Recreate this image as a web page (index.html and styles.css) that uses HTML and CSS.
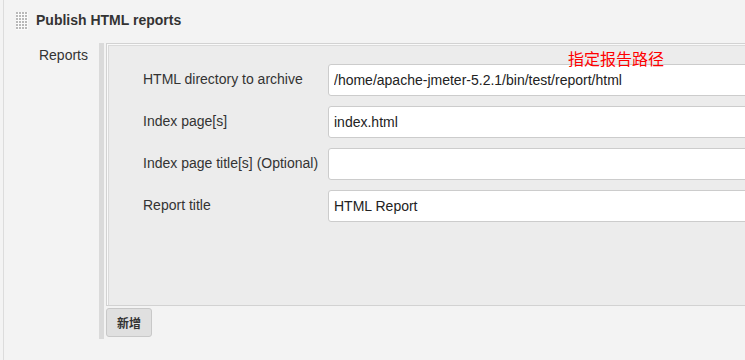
FILE: index.html
```html
<!DOCTYPE html>
<html>
<head>
<meta charset="utf-8">
<link rel="stylesheet" href="styles.css">
</head>
<body>
<div class="page">
  <div class="header">
    <svg class="handle" width="12" height="18" viewBox="0 0 12 18">
      <defs>
        <pattern id="dots" width="3" height="3" patternUnits="userSpaceOnUse">
          <rect width="3" height="3" fill="#fbfbfb"/>
          <rect x="0" y="0" width="2" height="2" fill="#b9b9b9"/>
        </pattern>
      </defs>
      <rect width="12" height="18" fill="url(#dots)"/>
    </svg>
    <span class="title">Publish HTML reports</span>
  </div>
  <div class="section">
    <div class="section-label">Reports</div>
    <div class="repeat">
      <div class="box">
        <div class="note">指定报告路径</div>
        <div class="row">
          <div class="label">HTML directory to archive</div>
          <div class="field"><input class="input" type="text" value="/home/apache-jmeter-5.2.1/bin/test/report/html"></div>
        </div>
        <div class="row">
          <div class="label">Index page[s]</div>
          <div class="field"><input class="input" type="text" value="index.html"></div>
        </div>
        <div class="row">
          <div class="label">Index page title[s] (Optional)</div>
          <div class="field"><input class="input" type="text" value=""></div>
        </div>
        <div class="row">
          <div class="label">Report title</div>
          <div class="field"><input class="input" type="text" value="HTML Report"></div>
        </div>
      </div>
      <button class="add">新增</button>
    </div>
  </div>
</div>
</body>
</html>
```
FILE: styles.css
```css
html, body {
  margin: 0;
  padding: 0;
  background: #f3f3f3;
  overflow: hidden;
  width: 745px;
  height: 360px;
}
body {
  font-family: "Liberation Sans", Arial, "Noto Sans CJK SC", sans-serif;
  font-size: 14px;
  color: #333;
}
.page {
  margin-left: 3px;
  border-left: 1px solid #dcdcdc;
  height: 360px;
  width: 1000px;
}
.header {
  display: flex;
  align-items: center;
  height: 36px;
  padding-top: 6px;
  box-sizing: border-box;
  padding-left: 12px;
}
.handle {
  display: block;
}
.title {
  font-weight: bold;
  margin-left: 8px;
  line-height: 16px;
  margin-top: -2px;
  color: #333;
}
.section {
  display: flex;
  margin-top: 7px;
}
.section-label {
  width: 84px;
  text-align: right;
  padding-top: 4px;
  line-height: 16px;
  color: #333;
}
.repeat {
  margin-left: 11px;
  border-left: 5px solid #dadada;
  padding-left: 2px;
  padding-bottom: 2px;
  width: 800px;
}
.box {
  position: relative;
  height: 263px;
  box-sizing: border-box;
  background: #ececec;
  border: 1px solid #d2d2d2;
  box-shadow: inset 1px 1px 0 #f9f9f9, inset 2px 2px 0 #dadada;
  padding-top: 20px;
  padding-left: 36px;
  display: flex;
  flex-direction: column;
  gap: 10px;
}
.note {
  position: absolute;
  left: 461px;
  top: 5px;
  color: #ff0000;
  font-family: "Noto Sans CJK SC", sans-serif;
  font-size: 16px;
  line-height: 18px;
}
.row {
  display: flex;
  align-items: center;
  height: 32px;
}
.label {
  width: 185px;
  color: #333;
  margin-top: -2px;
}
.field {
  flex: 1;
}
.input {
  display: block;
  width: 100%;
  height: 32px;
  box-sizing: border-box;
  border: 1px solid #cccccc;
  border-radius: 3px;
  background: #fff;
  padding: 0 5px;
  font-family: "Liberation Sans", Arial, sans-serif;
  font-size: 14px;
  color: #222;
  outline: none;
}
.add {
  display: block;
  margin-top: 2px;
  margin-left: 0;
  width: 46px;
  height: 29px;
  box-sizing: border-box;
  background: #e0e0e0;
  border: 1px solid #c8c8c8;
  border-radius: 3px;
  font-family: "Noto Sans CJK SC", sans-serif;
  font-weight: bold;
  font-size: 12px;
  color: #333;
  padding: 0;
}
```
